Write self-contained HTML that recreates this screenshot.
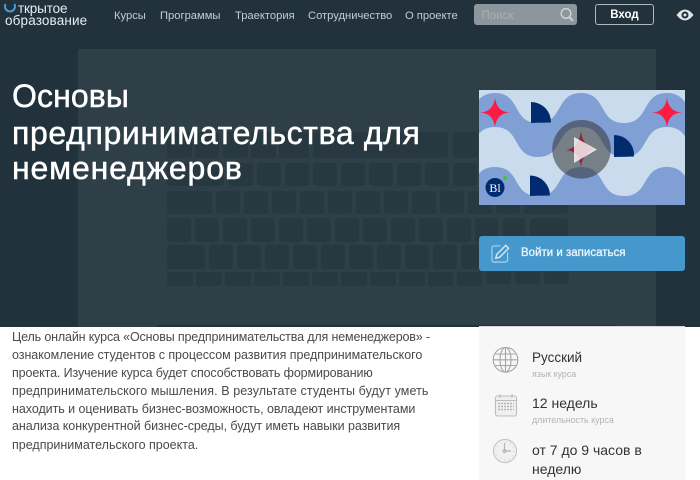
<!DOCTYPE html>
<html lang="ru"><head><meta charset="utf-8"><title>Основы предпринимательства для неменеджеров</title>
<style>
html,body{margin:0;padding:0;background:#fff}
#p{position:relative;width:700px;height:480px;overflow:hidden;font-family:"Liberation Sans","DejaVu Sans",sans-serif;background:#fff}
#p div{position:absolute;white-space:nowrap}
.n{top:8.500px;font-size:11.200px;line-height:15px;color:#c3ccd2}
.h{left:12px;color:#fff;font-size:32px;line-height:40px;-webkit-text-stroke:.45px #fff}
.b{left:12px;font-size:12.500px;line-height:18px;color:#4a4a4a}
</style></head><body><div id="p">
<svg style="position:absolute;left:0;top:0" width="700" height="327" viewBox="0 0 700 327">
<rect width="700" height="327" fill="#22323d"/>
<rect x="78" y="49" width="578" height="278" fill="#2e3f48"/>
<rect x="157" y="325" width="460" height="2" fill="#22323d"/>
<g fill="#273841">
<rect x="167" y="132" width="25" height="26" rx="3"/><rect x="195" y="132" width="24" height="26" rx="3"/><rect x="223" y="132" width="25" height="26" rx="3"/><rect x="251" y="132" width="25" height="26" rx="3"/><rect x="279" y="132" width="30" height="26" rx="3"/><rect x="313" y="132" width="135" height="26" rx="3"/><rect x="453" y="132" width="25" height="26" rx="3"/>
<rect x="167" y="163" width="57" height="23" rx="3"/><rect x="229" y="163" width="24" height="23" rx="3"/><rect x="257" y="163" width="24" height="23" rx="3"/><rect x="285" y="163" width="24" height="23" rx="3"/><rect x="313" y="163" width="24" height="23" rx="3"/><rect x="341" y="163" width="24" height="23" rx="3"/><rect x="369" y="163" width="24" height="23" rx="3"/><rect x="397" y="163" width="24" height="23" rx="3"/><rect x="425" y="163" width="24" height="23" rx="3"/><rect x="453" y="163" width="24" height="23" rx="3"/>
<rect x="167" y="191" width="45" height="23" rx="3"/><rect x="216" y="191" width="24" height="23" rx="3"/><rect x="244" y="191" width="24" height="23" rx="3"/><rect x="272" y="191" width="24" height="23" rx="3"/><rect x="300" y="191" width="24" height="23" rx="3"/><rect x="328" y="191" width="24" height="23" rx="3"/><rect x="356" y="191" width="24" height="23" rx="3"/><rect x="384" y="191" width="24" height="23" rx="3"/><rect x="412" y="191" width="24" height="23" rx="3"/><rect x="440" y="191" width="24" height="23" rx="3"/><rect x="468" y="191" width="24" height="23" rx="3"/><rect x="496" y="191" width="24" height="23" rx="3"/><rect x="524" y="191" width="44" height="23" rx="3"/>
<rect x="167" y="218" width="24" height="24" rx="3"/><rect x="195" y="218" width="24" height="24" rx="3"/><rect x="223" y="218" width="24" height="24" rx="3"/><rect x="251" y="218" width="24" height="24" rx="3"/><rect x="279" y="218" width="24" height="24" rx="3"/><rect x="307" y="218" width="24" height="24" rx="3"/><rect x="335" y="218" width="24" height="24" rx="3"/><rect x="363" y="218" width="24" height="24" rx="3"/><rect x="391" y="218" width="24" height="24" rx="3"/><rect x="419" y="218" width="24" height="24" rx="3"/><rect x="447" y="218" width="24" height="24" rx="3"/><rect x="475" y="218" width="23" height="24" rx="3"/><rect x="503" y="218" width="22" height="24" rx="3"/><rect x="530" y="218" width="38" height="24" rx="3"/>
<rect x="167" y="245" width="38" height="24" rx="3"/><rect x="209" y="245" width="24" height="24" rx="3"/><rect x="237" y="245" width="24" height="24" rx="3"/><rect x="265" y="245" width="24" height="24" rx="3"/><rect x="293" y="245" width="24" height="24" rx="3"/><rect x="321" y="245" width="24" height="24" rx="3"/><rect x="349" y="245" width="24" height="24" rx="3"/><rect x="377" y="245" width="24" height="24" rx="3"/><rect x="405" y="245" width="24" height="24" rx="3"/><rect x="433" y="245" width="24" height="24" rx="3"/><rect x="461" y="245" width="24" height="24" rx="3"/>
<rect x="167" y="272" width="26" height="14" rx="3"/><rect x="196" y="272" width="26" height="14" rx="3"/><rect x="225" y="272" width="26" height="14" rx="3"/><rect x="254" y="272" width="26" height="14" rx="3"/><rect x="283" y="272" width="26" height="14" rx="3"/><rect x="312" y="272" width="26" height="14" rx="3"/><rect x="341" y="272" width="26" height="14" rx="3"/><rect x="370" y="272" width="26" height="14" rx="3"/><rect x="399" y="272" width="26" height="14" rx="3"/><rect x="428" y="272" width="25" height="14" rx="3"/><rect x="457" y="272" width="25" height="14" rx="3"/><rect x="486" y="272" width="25" height="12" rx="3"/><rect x="515" y="272" width="25" height="12" rx="3"/><rect x="544" y="272" width="25" height="12" rx="3"/>
</g>
</svg>

<svg style="position:absolute;left:3px;top:2px" width="16" height="14" viewBox="0 0 16 14"><path d="M2.600 2A5 5 0 1 0 11.400 2" fill="none" stroke="#4a9bd4" stroke-width="2"/></svg>
<div style="left:18px;top:2px;font-size:13.500px;line-height:14px;color:#e8edf0;letter-spacing:-.15px">ткрытое</div>
<div style="left:5px;top:14px;font-size:13.500px;line-height:14px;color:#e8edf0;letter-spacing:.15px">образование</div>

<div class="n" style="left:114px">Курсы</div>
<div class="n" style="left:160px">Программы</div>
<div class="n" style="left:235px">Траектория</div>
<div class="n" style="left:308px">Сотрудничество</div>
<div class="n" style="left:405px">О проекте</div>

<div style="left:474px;top:4px;width:103px;height:21px;background:#8c969c;border-radius:3px"></div>
<div style="left:481.500px;top:8px;font-size:11.500px;line-height:16px;color:#a9b1b6">Поиск</div>
<svg style="position:absolute;left:559px;top:7px" width="16" height="16" viewBox="0 0 16 16"><circle cx="7" cy="6.500" r="4.800" fill="none" stroke="#d4d9dc" stroke-width="1.300"/><path d="M10.300 10l3.500 3.800" stroke="#d4d9dc" stroke-width="1.800" fill="none"/></svg>
<div style="left:595px;top:4px;width:57px;height:19px;border:1px solid #aeb8be;border-radius:3px"></div>
<div style="left:595px;top:8px;width:59px;text-align:center;font-size:11.500px;line-height:15px;font-weight:bold;color:#fff">Вход</div>
<svg style="position:absolute;left:676px;top:7px" width="18" height="16" viewBox="0 0 18 16"><path d="M0.500 8Q9-3 17.500 8Q9 19 0.500 8Z" fill="#e3e6e8"/><circle cx="9" cy="8" r="3.500" fill="#22323d"/><circle cx="9" cy="8" r="1.500" fill="#e3e6e8"/></svg>

<div class="h" style="top:76px;letter-spacing:.1px">Основы</div>
<div class="h" style="top:112.500px;letter-spacing:.65px">предпринимательства для</div>
<div class="h" style="top:148px;letter-spacing:.85px">неменеджеров</div>

<svg style="position:absolute;left:479px;top:90px" width="206" height="115" viewBox="479 90 206 115">
<rect x="479" y="90" width="206" height="115" fill="#cbdbee"/>
<path d="M452 123C478 123 469 93 495 93C521 93 512 123 538 123C564 123 555 93 581 93C607 93 598 123 624 123C650 123 641 93 667 93C693 93 684 123 710 123V157C684 157 693 127 667 127C641 127 650 157 624 157C598 157 607 127 581 127C555 127 564 157 538 157C512 157 521 127 495 127C469 127 478 157 452 157Z" fill="#7f9fd5"/>
<path d="M452 196C478 196 469 167 495 167C521 167 512 196 538 196C564 196 555 167 581 167C607 167 598 196 624 196C650 196 641 167 667 167C693 167 684 196 710 196V205H452Z" fill="#7f9fd5"/>
<g fill="#ff1a44"><path d="M495 98Q497 112 510 112.500Q497 113 495 127Q493 113 480 112.500Q493 112 495 98Z"/><path d="M667 98Q669 112 682 112.500Q669 113 667 127Q665 113 652 112.500Q665 112 667 98Z"/></g>
<g fill="#002c6f"><path d="M531 102A20 20 0 0 1 551 122.500L531 123Z"/><path d="M614 135A20 20 0 0 1 634 156.500L614 157Z"/><path d="M530 175.500A20 20 0 0 1 550 195.500L530 196Z"/></g>
<circle cx="495" cy="187.500" r="9.500" fill="#002c6f"/>
<text x="495" y="192" font-family="Liberation Serif,serif" font-size="12" fill="#fff" text-anchor="middle">Bl</text>
<circle cx="505" cy="178" r="2" fill="#3cc43c"/>
<path d="M581 131Q583 148 597 149Q583 151 581 167Q579 151 566 150Q579 148 581 131Z" fill="#ff1a44"/>
<circle cx="581.500" cy="149.300" r="29.300" fill="#333" fill-opacity=".55"/>
<path d="M574 137L597 149.500L574 163Z" fill="#fff" fill-opacity=".78"/>
</svg>

<div style="left:479px;top:236px;width:206px;height:35px;background:#4598cc;border-radius:3px"></div>
<svg style="position:absolute;left:491px;top:244px" width="19" height="19" viewBox="0 0 20 20"><path d="M10 2H3.500Q1 2 1 4.500V16.500Q1 19 3.500 19H15Q17.500 19 17.500 16.500V9" fill="none" stroke="#b9d8ec" stroke-width="1.100"/><path d="M5 15L6 11L15.500 1.500L18.500 4.500L9 14Z" fill="none" stroke="#d6e8f3" stroke-width="1.500"/></svg>
<div style="left:521px;top:245px;font-size:11.500px;line-height:16px;color:#eef6fb;-webkit-text-stroke:.3px #eef6fb">Войти и записаться</div>

<div style="left:479px;top:326px;width:206px;height:1px;background:#d5d8da"></div>
<div style="left:479px;top:327px;width:206px;height:153px;background:#f7f7f7"></div>

<div class="b" style="top:328px;letter-spacing:-.15px">Цель онлайн курса «Основы предпринимательства для неменеджеров» -</div>
<div class="b" style="top:346px;letter-spacing:-.05px">ознакомление студентов с процессом развития предпринимательского</div>
<div class="b" style="top:363.500px;letter-spacing:-.12px">проекта. Изучение курса будет способствовать формированию</div>
<div class="b" style="top:381.500px;letter-spacing:.09px">предпринимательского мышления. В результате студенты будут уметь</div>
<div class="b" style="top:399.500px;letter-spacing:-.05px">находить и оценивать бизнес-возможность, овладеют инструментами</div>
<div class="b" style="top:417px;letter-spacing:-.06px">анализа конкурентной бизнес-среды, будут иметь навыки развития</div>
<div class="b" style="top:435.500px">предпринимательского проекта.</div>

<svg style="position:absolute;left:492px;top:346px" width="28" height="28" viewBox="0 0 28 28"><g fill="none" stroke="#a5a5a5" stroke-width="1.100"><circle cx="13.500" cy="13.800" r="12.300"/><ellipse cx="13.500" cy="13.800" rx="5.500" ry="12.300"/><path d="M13.500 2V26M1.500 13.800H25.500M3.500 8H23.500M3.500 19.500H23.500"/></g></svg>
<svg style="position:absolute;left:494px;top:393px" width="26" height="26" viewBox="0 0 26 26"><rect x="1.500" y="3" width="21" height="20" rx="2" fill="#f0f0f0" stroke="#bdbdbd" stroke-width="1.100"/><path d="M1.500 7.500H22.500M6 1V5M18 1V5" stroke="#bdbdbd" stroke-width="1.100"/><path d="M4 10.500H20M4 13.500H20M4 16.500H20" stroke="#b5b5b5" stroke-width="1.500" stroke-dasharray="2 1"/></svg>
<svg style="position:absolute;left:492px;top:438px" width="26" height="26" viewBox="0 0 26 26"><circle cx="13" cy="13" r="11.500" fill="#f1f1f1" stroke="#c6c6c6" stroke-width="1.200"/><circle cx="13" cy="13" r="9" fill="none" stroke="#d0d0d0" stroke-width="1.200" stroke-dasharray="1 3.700"/><path d="M12.500 5V13H19" fill="none" stroke="#b5b5b5" stroke-width="1.200"/><circle cx="12.500" cy="13" r="1.500" fill="none" stroke="#b5b5b5"/></svg>

<div style="left:532px;top:349px;font-size:13.500px;line-height:18px;color:#333">Русский</div>
<div style="left:532px;top:368px;font-size:8.900px;line-height:12px;color:#b3b3b3">язык курса</div>
<div style="left:532px;top:394px;font-size:14px;line-height:18px;color:#333">12 недель</div>
<div style="left:532px;top:414px;font-size:8.900px;line-height:12px;color:#b3b3b3">длительность курса</div>
<div style="left:532px;top:441px;font-size:14px;line-height:18px;color:#333">от 7 до 9 часов в</div>
<div style="left:532px;top:460px;font-size:14px;line-height:18px;color:#333">неделю</div>
</div></body></html>
